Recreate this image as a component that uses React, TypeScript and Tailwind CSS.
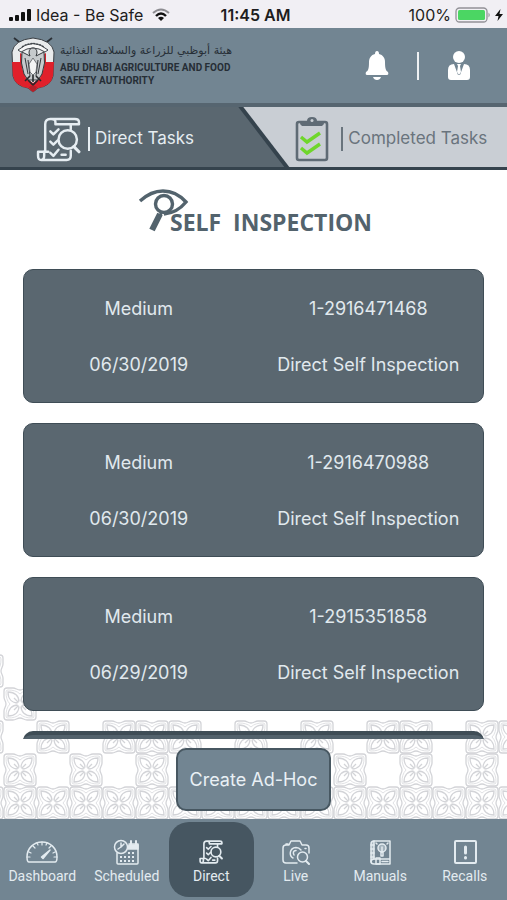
import type { ReactNode } from "react";

type Task = { priority: string; number: string; date: string; kind: string };

const tasks: Task[] = [
  { priority: "Medium", number: "1-2916471468", date: "06/30/2019", kind: "Direct Self Inspection" },
  { priority: "Medium", number: "1-2916470988", date: "06/30/2019", kind: "Direct Self Inspection" },
  { priority: "Medium", number: "1-2915351858", date: "06/29/2019", kind: "Direct Self Inspection" },
];

/* Centres of the ornament tiles, in units of one tile, row by row from the bottom. */
const ornamentRows: number[][] = [
  [-1, 0, 1, 2, 3, 4, 5, 6, 7, 8, 9, 10, 11, 12, 13, 14, 15],
  [0, 2, 4, 6, 8, 10, 12, 14],
  [-1, 1, 3, 4, 5, 7, 9, 11, 12, 14, 15],
  [0],
  [-1],
];

function Ornament() {
  return (
    <svg
      className="pointer-events-none absolute bottom-0 left-0"
      width="540"
      height="170"
      viewBox="0 0 540 170"
      fill="none"
      stroke="#d3d4d8"
      strokeWidth="1.3"
      aria-hidden="true"
    >
      <defs>
        <path id="petal" d="M1-2C1-8 5-12 12-12C12-5 8-1 2-1" />
        <g id="tile">
          <path d="M0-14C3-14 4-16 7-16H13Q16-16 16-13V-7C16-4 14-3 14 0C14 3 16 4 16 7V13Q16 16 13 16H7C4 16 3 14 0 14C-3 14-4 16-7 16H-13Q-16 16-16 13V7C-16 4-14 3-14 0C-14-3-16-4-16-7V-13Q-16-16-13-16H-7C-4-16-3-14 0-14Z" />
          <path
            d="M0-10C3-13 7-14 12-14Q14-14 14-12C14-7 13-3 10 0C13 3 14 7 14 12Q14 14 12 14C7 14 3 13 0 10C-3 13-7 14-12 14Q-14 14-14 12C-14 7-13 3-10 0C-13-3-14-7-14-12Q-14-14-12-14C-7-14-3-13 0-10Z"
            strokeWidth="0.7"
          />
          <use href="#petal" />
          <use href="#petal" transform="rotate(90)" />
          <use href="#petal" transform="rotate(180)" />
          <use href="#petal" transform="rotate(270)" />
          <path d="M-6-6L6 6M6-6L-6 6" />
          <path d="M-3 0L0-3L3 0L0 3Z" fill="#fff" stroke="none" />
        </g>
      </defs>
      {ornamentRows.map((row, r) =>
        row.map((c) => <use key={`${r}:${c}`} href="#tile" x={20 + c * 33} y={154 - r * 33} />),
      )}
    </svg>
  );
}

function Crest() {
  return (
    <svg width="44" height="60" viewBox="0 0 44 60" aria-hidden="true">
      <path d="M3 4L12 11M41 4L32 11" stroke="#2b3035" strokeWidth="1.8" />
      <path d="M1 18Q3 6 22 4Q41 6 43 18L42 42Q40 52 27 54L22 58L17 54Q4 52 2 42Z" fill="#e9ebec" stroke="#3a3f44" />
      <path d="M1 28H10L15 44L22 49L29 44L34 28H43L42 42Q40 52 27 54L22 58L17 54Q4 52 2 42Z" fill="#e0202b" />
      <path d="M7 16Q22 3 37 16L34 18Q22 10 10 18Z" fill="#f7f7f7" stroke="#41464b" strokeWidth="1" />
      <path d="M11 13Q22 6 33 13" fill="none" stroke="#41464b" strokeWidth="1.4" strokeDasharray="2 1" />
      <path d="M9 19L14 22L15 38L9 32Z M35 19L30 22L29 38L35 32Z" fill="#d3232d" />
      <path d="M22 14Q26 14 26 19L25 22L33 18Q35 29 31 40L27 46H17L13 40Q9 29 11 18L19 22L18 19Q18 14 22 14Z" fill="#c6cacc" stroke="#35393d" strokeWidth="1" />
      <path d="M14 24L17 40M17 26L19 42M30 24L27 40M27 26L25 42" stroke="#35393d" strokeWidth="1" />
      <path d="M22 24L26 30L25 38L22 41L19 38L18 30Z" fill="#f3f4f4" stroke="#55595d" strokeWidth=".8" />
      <path d="M19 42L14 47M25 42L30 47M22 41V48M17 46L22 51L27 46" stroke="#25282b" strokeWidth="1.6" fill="none" />
      <path d="M18 53Q22 50 26 53L24 57H20Z" fill="#b5202a" />
    </svg>
  );
}

/* Checklist scroll with a magnifier, shared by the task tab and the bottom bar. */
function ScrollIcon({ size, stroke }: { size: number; stroke: number }) {
  return (
    <svg
      width={size}
      height={size}
      viewBox="0 0 44 44"
      fill="none"
      stroke="currentColor"
      strokeWidth={stroke}
      strokeLinecap="round"
      strokeLinejoin="round"
      aria-hidden="true"
    >
      <path d="M9 33V7Q9 2 14 2H38Q42 2 42 5V7H19V5Q19 2 15 2" />
      <path d="M34 7V12M34 33V38Q34 42 30 42H5Q2 42 2 38V34H8V38Q8 42 5 42" />
      <path d="M8 34H12" />
      <circle cx="31" cy="22" r="9" />
      <path d="M37 29L42 34" strokeWidth={stroke + 0.6} />
      <path d="M14 14L17 17L22 12M14 24L17 27L21 23M14 35L17 38L22 32M25 37H29" />
    </svg>
  );
}

function ClipboardIcon() {
  return (
    <svg width="34" height="46" viewBox="0 0 34 46" fill="none" aria-hidden="true">
      <rect x="2" y="6" width="30" height="38" rx="2" stroke="#5f6b75" strokeWidth="2.6" />
      <path d="M5 8Q5 5 10 5H12Q12 1 17 1Q22 1 22 5H24Q29 5 29 8L27 10H7Z" fill="#5f6b75" />
      <circle cx="17" cy="4.500" r="1.500" fill="#c9ced4" />
      <path d="M6 21L12 26L25 17M6 32L12 37L25 28" stroke="#6fd62b" strokeWidth="3.400" />
    </svg>
  );
}

function TitleMark() {
  return (
    <svg width="52" height="46" viewBox="0 0 52 46" fill="none" stroke="#53636d" aria-hidden="true">
      <path d="M2 13Q13 3 25 3Q38 3 48 14Q39 25 26 26" strokeWidth="3.400" />
      <circle cx="26" cy="16" r="8.500" strokeWidth="3.400" />
      <path d="M22 26L14 42" strokeWidth="6" />
      <path d="M24 23L22 28" strokeWidth="3" />
    </svg>
  );
}

function NavSvg({ children }: { children: ReactNode }) {
  return (
    <svg
      width="32"
      height="26"
      viewBox="0 0 32 26"
      fill="none"
      stroke="currentColor"
      strokeWidth="1.500"
      strokeLinecap="round"
      strokeLinejoin="round"
      aria-hidden="true"
    >
      {children}
    </svg>
  );
}

const navItems: { label: string; icon: ReactNode; active?: boolean }[] = [
  {
    label: "Dashboard",
    icon: (
      <NavSvg>
        <path d="M3 23Q1 23 1 18C1 9 8 3 16 3S31 9 31 18Q31 23 29 23Z" />
        <path d="M16 3V6M7 7L9 9M25 7L23 9M3 13L5 14M29 13L27 14M1 18H4M31 18H28M11 4L12 6M21 4L20 6" strokeWidth="1.200" />
        <path d="M15.500 18L24 11L17 19.500Z" fill="currentColor" />
      </NavSvg>
    ),
  },
  {
    label: "Scheduled",
    icon: (
      <NavSvg>
        <path d="M18 5H27V24Q27 25 26 25H7Q6 25 6 24V14" />
        <path d="M18 6H27V10H17Z" fill="currentColor" />
        <path d="M20 2V6M25 2V6" strokeWidth="2" />
        <circle cx="10" cy="8" r="6.500" />
        <path d="M10 4V8L7 10M10 8L13 5" />
        <path d="M9 18H11M13 18H15M17 18H19M21 18H23M9 22H11M13 22H15M17 22H19M21 22H23M17 14H19M21 14H23" strokeWidth="2.200" strokeLinecap="butt" />
      </NavSvg>
    ),
  },
  {
    label: "Direct",
    active: true,
    icon: (
      <span className="flex h-[26px] items-center">
        <ScrollIcon size={24} stroke={3} />
      </span>
    ),
  },
  {
    label: "Live",
    icon: (
      <NavSvg>
        <path d="M17 24H6Q3 24 3 21V9Q3 6 6 6H9L11 2H20L22 6H26Q29 6 29 9V14M6 6V5H8" />
        <path d="M13 19C9 17 9 9 16 8.500Q19 8.500 21 11M14 16Q12 12 16 11.500" />
        <circle cx="22.500" cy="18" r="5" />
        <path d="M26 22L29 25" strokeWidth="2" />
        <path d="M25 9.500H26" />
      </NavSvg>
    ),
  },
  {
    label: "Manuals",
    icon: (
      <NavSvg>
        <path d="M10 2H26V20H10Q7 20 7 22.500T10 25H26V20" />
        <path d="M7 23V5Q7 2 10 2V20" fill="currentColor" fillOpacity=".5" />
        <path d="M7 6H10M7 10H10M7 14H10M7 18H10" />
        <circle cx="18" cy="9" r="4" fill="currentColor" fillOpacity=".45" />
        <path d="M17 13V17H19V13M18 8V13M13 5L12 4M23 5L24 4" />
        <path d="M12 19H16V25H12ZM18 22.500H24" />
      </NavSvg>
    ),
  },
  {
    label: "Recalls",
    icon: (
      <NavSvg>
        <rect x="6" y="2" width="21" height="22" rx="1" strokeWidth="2" />
        <path d="M16.500 8V14" strokeWidth="3" />
        <path d="M16.500 18.500V19" strokeWidth="3" />
      </NavSvg>
    ),
  },
];

function StatusBar() {
  return (
    <div className="grid h-7 shrink-0 grid-cols-[1fr_auto_1fr] items-center bg-[#f1eff4] pt-0.5 pl-2 pr-1 text-base text-[#1d1d20]">
      <div className="flex items-center gap-1">
        <svg width="24" height="14" viewBox="0 0 24 14" fill="#111" aria-hidden="true">
          <rect x="1" y="9" width="4" height="4" rx="1" />
          <rect x="7" y="7" width="4" height="6" rx="1" />
          <rect x="13" y="4" width="4" height="9" rx="1" />
          <rect x="19" y="1" width="4" height="12" rx="1" />
        </svg>
        <span className="whitespace-nowrap">Idea - Be Safe</span>
        <svg className="ml-1" width="20" height="14" viewBox="0 0 20 14" fill="none" aria-hidden="true">
          <path d="M2 5Q10-2 18 5" stroke="#8d8c91" strokeWidth="2" />
          <path d="M5 8Q10 3 15 8" stroke="#111" strokeWidth="2.400" />
          <path d="M7 10Q10 7.500 13 10L10 13Z" fill="#111" />
        </svg>
      </div>
      <span className="font-semibold">11:45 AM</span>
      <div className="flex items-center justify-end gap-1">
        <span>100%</span>
        <svg width="36" height="16" viewBox="0 0 36 16" aria-hidden="true">
          <rect x="1" y="1" width="31" height="14" rx="3.500" fill="#f1eff4" stroke="#929197" strokeWidth="1.300" />
          <rect x="3" y="3" width="27" height="10" rx="1.500" fill="#4bd663" />
          <path d="M33.500 5.500Q36 8 33.500 10.500Z" fill="#929197" />
        </svg>
        <svg width="8" height="14" viewBox="0 0 8 14" fill="#111" aria-hidden="true">
          <path d="M5.500 1L0 8H3.500L2.500 13L8 6H4.500Z" />
        </svg>
      </div>
    </div>
  );
}

function Header() {
  return (
    <header className="flex h-[75px] shrink-0 items-center justify-between bg-[#728592] pl-[11px] pr-9">
      <a href="#home" className="flex items-center gap-[5px] pb-[3px] text-[#262e36]">
        <Crest />
        <span className="flex flex-col whitespace-nowrap font-['Roboto',sans-serif] text-[10px] leading-[13px] font-bold">
          <span lang="ar" dir="rtl" className="font-['DejaVu_Sans',sans-serif] text-[11px] leading-5 font-normal">
            هيئة أبوظبي للزراعة والسلامة الغذائية
          </span>
          <span>ABU DHABI AGRICULTURE AND FOOD</span>
          <span>SAFETY AUTHORITY</span>
        </span>
      </a>
      <div className="flex items-center gap-7 text-white">
        <button type="button" aria-label="Notifications">
          <svg width="24" height="30" viewBox="0 0 24 30" fill="currentColor" aria-hidden="true">
            <path d="M12 0Q14 0 14 3C18 4 20 7 20 11C20 18 21 20 23 21Q24 24 22 24H2Q0 24 1 21C3 20 4 18 4 11C4 7 6 4 10 3Q10 0 12 0Z" />
            <path d="M8 26H16Q15 29 12 29T8 26Z" />
          </svg>
        </button>
        <span className="h-7 w-0.5 bg-[#eef1f3]" />
        <button type="button" aria-label="Profile">
          <svg width="24" height="30" viewBox="0 0 24 30" fill="currentColor" aria-hidden="true">
            <circle cx="12" cy="6" r="6" />
            <path d="M7 13Q1 13 1 19V26Q1 29 4 29H20Q23 29 23 26V19Q23 13 17 13L13 24H11Z" />
            <path d="M10 13H14L13 15L14 21L12 24L10 21L11 15Z" />
          </svg>
        </button>
      </div>
    </header>
  );
}

function TaskTabs() {
  return (
    <div className="flex h-[67px] shrink-0 border-t-4 border-b-[3px] border-t-[#566570] border-b-[#35434d] bg-[#5a6770] text-[17px]">
      <button type="button" className="flex min-w-0 flex-1 items-center pt-1 pl-9 text-[#e6edf2]">
        <ScrollIcon size={45} stroke={2.4} />
        <span className="ml-[7px] h-6 w-0.5 bg-[#e6edf2]" />
        <span className="ml-[5px] whitespace-nowrap">Direct Tasks</span>
      </button>
      <button
        type="button"
        className="flex w-[53%] bg-[#35434d] text-[#69747d] [clip-path:polygon(0_0,100%_0,100%_100%,46px_100%)]"
      >
        <span className="flex h-full w-full items-center bg-[#c9ced4] pt-1 pl-[57px] [clip-path:polygon(5px_0,100%_0,100%_100%,51px_100%)]">
          <ClipboardIcon />
          <span className="ml-3 h-6 w-0.5 bg-[#69747d]" />
          <span className="ml-[5px] whitespace-nowrap">Completed Tasks</span>
        </span>
      </button>
    </div>
  );
}

function TaskCard({ task }: { task: Task }) {
  return (
    <li className="grid shrink-0 grid-cols-2 rounded-[10px] border border-[#3f4d56] bg-[#5a6770] pt-[11px] pb-[9px] text-center text-lg leading-[56px] whitespace-nowrap text-[#e1e9ee]">
      <span>{task.priority}</span>
      <span>{task.number}</span>
      <span>{task.date}</span>
      <span>{task.kind}</span>
    </li>
  );
}

export default function App() {
  return (
    <div className="flex h-screen flex-col overflow-hidden bg-white font-['Inter',sans-serif]">
      <StatusBar />
      <Header />
      <TaskTabs />
      <main className="relative flex min-h-0 flex-1 flex-col overflow-hidden">
        <Ornament />
        <div className="relative flex shrink-0 justify-center pt-[18px] pb-[34px] pl-[3px]">
          <TitleMark />
          <h1 className="-ml-5 pt-[21px] font-['Open_Sans',sans-serif] text-[23px] leading-[26px] font-bold whitespace-pre text-[#53636d]">
            SELF  INSPECTION
          </h1>
        </div>
        <ul className="relative flex min-h-0 flex-1 flex-col gap-5 overflow-y-auto px-[23px] [scrollbar-width:none]">
          {tasks.map((task) => (
            <TaskCard key={task.number} task={task} />
          ))}
          <li className="h-[134px] shrink-0 rounded-[10px] border-t-4 border-[#3f4d56] bg-[#53626c]" />
        </ul>
        <div className="relative flex shrink-0 justify-center pt-[9px] pb-2">
          <button
            type="button"
            className="h-[63px] rounded-[10px] border-2 border-[#475761] bg-[#728592] px-3 text-lg whitespace-nowrap text-[#e9f0f5]"
          >
            Create Ad-Hoc
          </button>
        </div>
      </main>
      <nav className="grid h-[81px] shrink-0 grid-cols-6 bg-[#728592] py-[3px] font-['Roboto',sans-serif] text-sm text-[#e3ebf0]">
        {navItems.map((item) => (
          <a
            key={item.label}
            href={`#${item.label.toLowerCase()}`}
            aria-current={item.active ? "page" : undefined}
            className={`flex flex-col items-center gap-0.5 rounded-[20px] pt-[17px] ${item.active ? "bg-[#465661]" : ""}`}
          >
            {item.icon}
            <span className="leading-[18px]">{item.label}</span>
          </a>
        ))}
      </nav>
    </div>
  );
}
